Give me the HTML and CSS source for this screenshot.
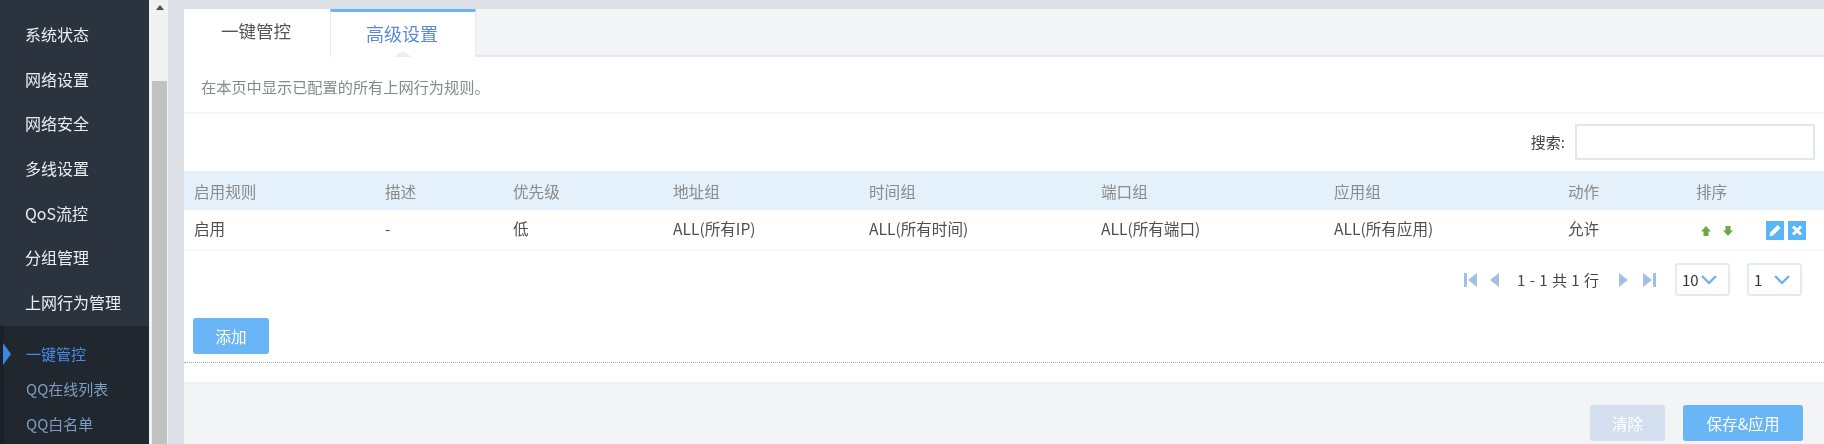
FILE: index.html
```html
<!DOCTYPE html>
<html lang="zh">
<head>
<meta charset="utf-8">
<title>上网行为管理</title>
<link rel="stylesheet" href="styles.css">
</head>
<body>
<div class="app">
  <nav class="sidebar">
    <ul class="menu">
      <li>系统状态</li>
      <li>网络设置</li>
      <li>网络安全</li>
      <li>多线设置</li>
      <li>QoS流控</li>
      <li>分组管理</li>
      <li>上网行为管理</li>
    </ul>
    <ul class="submenu">
      <li class="current">一键管控</li>
      <li>QQ在线列表</li>
      <li>QQ白名单</li>
    </ul>
  </nav>
  <div class="scrollbar">
    <div class="scroll-up"></div>
    <div class="scroll-thumb"></div>
  </div>
  <main class="content">
    <div class="panel">
      <div class="tabs">
        <div class="tab">一键管控</div>
        <div class="tab active">高级设置</div>
      </div>
      <div class="body">
        <p class="desc">在本页中显示已配置的所有上网行为规则。</p>
        <div class="search">
          <label class="search-label">搜索:</label>
          <input class="search-input" type="text">
        </div>
        <div class="row head">
          <span>启用规则</span><span>描述</span><span>优先级</span><span>地址组</span><span>时间组</span><span>端口组</span><span>应用组</span><span>动作</span><span>排序</span>
        </div>
        <div class="row item">
          <span>启用</span><span>-</span><span>低</span><span>ALL(所有IP)</span><span>ALL(所有时间)</span><span>ALL(所有端口)</span><span>ALL(所有应用)</span><span>允许</span>
          <span class="ops">
            <svg class="arrow" viewBox="0 0 10 10"><path d="M5 0 L10 5.5 H7.5 V10 H2.5 V5.5 H0 Z"/></svg>
            <svg class="arrow" viewBox="0 0 10 10"><path d="M2.5 0 H7.5 V4.5 H10 L5 10 L0 4.5 H2.5 Z"/></svg>
            <span class="icon-btn edit"><svg viewBox="0 0 18 18"><path d="M11.5 3.5 L14.5 6.5 L7 14 L3.5 14.7 L4.2 11 Z" fill="#fff"/></svg></span>
            <span class="icon-btn del"><svg viewBox="0 0 18 18"><path d="M5 5 L13 13 M13 5 L5 13" stroke="#fff" stroke-width="3" fill="none"/></svg></span>
          </span>
        </div>
        <div class="pager">
          <svg class="pg first" viewBox="0 0 13 14"><path d="M0 0 H3 V14 H0 Z M13 0 V14 L4 7 Z"/></svg>
          <svg class="pg prev" viewBox="0 0 9 14"><path d="M9 0 V14 L0 7 Z"/></svg>
          <span class="pg-text">1 - 1 共 1 行</span>
          <svg class="pg next" viewBox="0 0 9 14"><path d="M0 0 V14 L9 7 Z"/></svg>
          <svg class="pg last" viewBox="0 0 13 14"><path d="M0 0 V14 L9 7 Z M10 0 H13 V14 H10 Z"/></svg>
          <div class="select size">10<svg class="chev" viewBox="0 0 16 9"><path d="M1 1 L8 8 L15 1"/></svg></div>
          <div class="select page">1<svg class="chev" viewBox="0 0 16 9"><path d="M1 1 L8 8 L15 1"/></svg></div>
        </div>
        <div class="add-wrap"><button class="btn add">添加</button></div>
      </div>
      <div class="footer">
        <button class="btn clear">清除</button>
        <button class="btn save">保存&amp;应用</button>
      </div>
    </div>
  </main>
</div>
</body>
</html>
```
FILE: styles.css
```css
* { box-sizing: border-box; }
html, body { margin: 0; padding: 0; height: 444px; overflow: hidden; }
body { font-family: "Noto Sans CJK SC", "Liberation Sans", sans-serif; font-size: 15px; color: #555; background: #dfe2e7; }
ul { list-style: none; margin: 0; padding: 0; }
p { margin: 0; }

.app { display: flex; height: 444px; filter: blur(.4px); }

.sidebar { width: 149px; flex: none; background: #2b333e; display: flex; flex-direction: column; }
.menu { padding-top: 12px; }
.menu li { height: 44.7px; line-height: 44px; padding-left: 25px; font-size: 16px; color: #eceef0; }
.submenu { flex: 1; margin-top: 1.5px; padding-top: 11px; background: #20272e; border-left: 4px solid #1a2025; }
.submenu li { position: relative; height: 35px; line-height: 34px; padding-left: 22px; font-size: 15px; color: #7f9cc0; }
.submenu .current { color: #4a8ae8; }
.submenu .current::before { content: ""; position: absolute; left: -1px; top: 6px; border-left: 8px solid #3d86e6; border-top: 11px solid transparent; border-bottom: 11px solid transparent; }

.scrollbar { width: 19px; flex: none; background: #f1f1f1; padding: 5px 1px 0 3px; display: flex; flex-direction: column; }
.scroll-up { align-self: center; width: 0; height: 0; border-left: 4.5px solid transparent; border-right: 4.5px solid transparent; border-bottom: 5px solid #505050; }
.scroll-thumb { flex: 1; margin-top: 71px; background: #c1c1c1; }

.content { flex: 1; min-width: 0; padding: 9px 0 0 16px; background: #dde0e6; }
.panel { height: 435px; background: #f3f4f6; display: flex; flex-direction: column; }

.tabs { display: flex; height: 48px; flex: none; border-bottom: 2px solid #e6e8ef; }
.tab { width: 146px; height: 48px; line-height: 44px; text-align: center; font-size: 17.5px; background: #fff; color: #555; padding-right: 2px; }
.tab.active { position: relative; border-top: 3px solid #6ab5f5; border-left: 1px solid #e6e8ef; border-right: 1px solid #e6e8ef; color: #5b87dc; line-height: 42px; font-size: 18px; }
.tab.active::after { content: ""; position: absolute; left: 63px; bottom: 0; border-left: 9px solid transparent; border-right: 9px solid transparent; border-bottom: 6px solid #eceef2; }

.body { height: 327px; flex: none; background: #fff; border-bottom: 2px solid #eeeff2; display: flex; flex-direction: column; }
.desc { height: 57px; line-height: 58px; padding-left: 17px; font-size: 15.2px; color: #85898f; border-bottom: 2px solid #f7f7f8; }

.search { display: flex; justify-content: flex-end; align-items: center; height: 57px; padding-right: 9px; padding-bottom: 2px; }
.search-label { font-size: 15px; color: #444; margin-right: 10px; }
.search-input { width: 240px; height: 36px; border: 2px solid #e3e6ec; background: #fff; outline: none; }

.row { display: grid; grid-template-columns: 191px 128px 160px 196px 232px 233px 234px 128px 1fr; padding-left: 10px; align-items: center; font-size: 15.6px; white-space: nowrap; }
.head { height: 39px; background: #e4f1fa; color: #8a8a8a; }
.item { height: 41px; padding-bottom: 3px; color: #505050; border-bottom: 2px solid #f6f7f8; }

.ops { display: flex; align-items: center; padding: 5px 0 0 5px; }
.arrow { width: 10px; height: 10px; fill: #6fa745; margin-right: 12px; }
.arrow + .arrow { margin-right: 33px; }
.icon-btn { width: 18px; height: 19px; background: #58b5f6; display: block; margin-right: 4px; }
.icon-btn svg { display: block; width: 18px; height: 19px; }

.pager { display: flex; align-items: center; height: 57px; padding-left: 1280px; font-size: 16px; color: #444; }
.pg { height: 14px; fill: #a3bfe6; flex: none; }
.first { width: 13px; margin-right: 13px; }
.prev { width: 9px; margin-right: 18px; }
.pg-text { width: 102px; white-space: nowrap; font-size: 15px; letter-spacing: .5px; }
.next { width: 9px; margin-right: 15px; }
.last { width: 13px; margin-right: 19px; }
.select { width: 55px; height: 33px; border: 2px solid #e6e9ee; border-radius: 3px; display: flex; align-items: center; padding-left: 5px; font-size: 15px; color: #333; gap: 2px; }
.select.page { margin-left: 17px; gap: 12px; }
.chev { width: 16px; height: 9px; fill: none; stroke: #6fb4ec; stroke-width: 2.4; }

.add-wrap { padding: 10px 0 0 9px; height: 55px; border-bottom: 1px dotted #a8a8a8; }
.btn { border: 0; border-radius: 3px; color: #fff; background: #6ab5f5; height: 36px; font: inherit; font-size: 15.6px; padding: 0; }
.add { width: 76px; }

.footer { flex: 1; display: flex; justify-content: flex-end; align-items: flex-start; gap: 18px; padding: 21px 21px 0 0; }
.clear { width: 75px; background: #d3deee; }
.save { width: 120px; }
```
